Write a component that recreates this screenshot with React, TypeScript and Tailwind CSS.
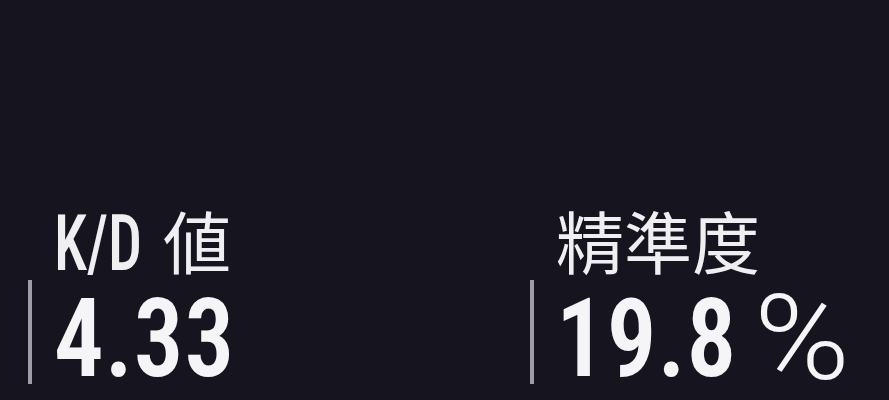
import React from "react";

type Stat = {
  prefix?: string;
  label: string;
  value: string;
  unit?: string;
};

const stats: Stat[] = [
  { prefix: "K/D", label: "値", value: "4.33" },
  { label: "精準度", value: "19.8", unit: "%" },
];

const latin = 'Roboto, "Noto Sans", sans-serif';
const cjk = '"Noto Sans CJK TC", sans-serif';

function StatBlock({ prefix, label, value, unit }: Stat) {
  return (
    <div className="flex shrink-0 flex-col">
      {/* title row: condensed latin prefix + CJK word */}
      <div className="flex h-[68px] items-baseline gap-[20px] pl-[26px] whitespace-nowrap text-[#efeff2]">
        {prefix && (
          <span
            className="-mr-[24px] inline-block origin-left translate-y-[1px] scale-x-[0.78] text-[77px] leading-[68px] font-medium font-stretch-condensed"
            style={{ fontFamily: latin }}
          >
            {prefix}
          </span>
        )}
        <span className="text-[68px] leading-[68px]" style={{ fontFamily: cjk }}>
          {label}
        </span>
      </div>

      {/* value row with the grey rule on its left */}
      <div className="mt-[6px] flex h-[104px] items-center border-l-[4px] border-[#9d9da4] pt-[14px] pl-[22px] whitespace-nowrap text-[#f5f5f7]">
        <span
          className="-mr-[20px] inline-block origin-left scale-x-[0.9] text-[110px] leading-none font-semibold tracking-[1px] font-stretch-condensed"
          style={{ fontFamily: latin }}
        >
          {value}
        </span>
        {unit && (
          <span
            className="ml-[17px] inline-block origin-left scale-x-[1.1] text-[118px] leading-none font-light"
            style={{ fontFamily: latin }}
          >
            {unit}
          </span>
        )}
      </div>
    </div>
  );
}

export default function App() {
  return (
    <div className="h-[400px] w-[889px] overflow-hidden bg-[#16151f]">
      <div className="flex pt-[206px] pl-[28px]">
        <div className="w-[502px] shrink-0">
          <StatBlock {...stats[0]} />
        </div>
        <StatBlock {...stats[1]} />
      </div>
    </div>
  );
}
